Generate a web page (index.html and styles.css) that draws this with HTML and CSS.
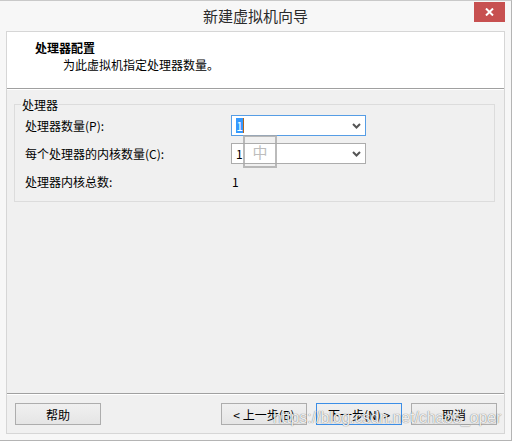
FILE: index.html
```html
<!DOCTYPE html>
<html lang="zh-CN">
<head>
<meta charset="utf-8">
<title>新建虚拟机向导</title>
<link rel="stylesheet" href="styles.css">
</head>
<body>
<div class="window">
  <div class="titlebar">
    <span class="spacer"></span>
    <div class="title">新建虚拟机向导</div>
    <div class="close" aria-label="关闭">
      <svg width="9" height="8" viewBox="0 0 9 8"><path d="M1 0.5 L8 7.5 M8 0.5 L1 7.5" stroke="#fff" stroke-width="2" fill="none"/></svg>
    </div>
  </div>
  <div class="frame">
    <header class="head">
      <div class="head-title">处理器配置</div>
      <div class="head-sub">为此虚拟机指定处理器数量。</div>
    </header>
    <main class="body">
      <fieldset class="group">
        <legend>处理器</legend>
        <div class="rows">
          <span class="lbl">处理器数量(P):</span>
          <div class="combo focused">
            <span class="val"><span class="sel">1</span><span class="caret"></span></span>
            <svg class="arrow" width="9" height="6" viewBox="0 0 9 6"><path d="M1 1 L4.5 4.5 L8 1" stroke="#555" stroke-width="2" fill="none"/></svg>
          </div>
          <span class="lbl">每个处理器的内核数量(C):</span>
          <div class="combo">
            <span class="val">1</span>
            <svg class="arrow" width="9" height="6" viewBox="0 0 9 6"><path d="M1 1 L4.5 4.5 L8 1" stroke="#555" stroke-width="2" fill="none"/></svg>
          </div>
          <span class="lbl">处理器内核总数:</span>
          <span class="total">1</span>
        </div>
      </fieldset>
    </main>
    <footer class="foot">
      <button class="btn">帮助</button>
      <div class="nav">
        <button class="btn">&lt; 上一步(B)</button>
        <button class="btn default">下一步(N) &gt;</button>
        <button class="btn">取消</button>
      </div>
    </footer>
  </div>
  <div class="ime">中</div>
  <div class="watermark">https://blog.csdn.net/chaos_oper</div>
</div>
</body>
</html>
```
FILE: styles.css
```css
* { box-sizing: border-box; }
html, body { margin: 0; padding: 0; background: #ffffff; }
body {
  font-family: "Noto Sans CJK SC", "Noto Sans", sans-serif;
  font-size: 12px;
  color: #000;
}
.window {
  position: relative;
  width: 512px;
  height: 441px;
  background: #f7f7f7;
  border-top: 1px solid #c9c9c9;
  border-right: 1px solid #b4b4b4;
  border-bottom: 1px solid #b4b4b4;
  padding: 0 6px;
  display: flex;
  flex-direction: column;
}
.titlebar {
  height: 30px;
  display: grid;
  grid-template-columns: 1fr auto 1fr;
  align-items: start;
}
.title {
  font-size: 15px;
  line-height: 30px;
  color: #2b2b2b;
}
.close {
  justify-self: end;
  margin-top: 1px;
  width: 31px;
  height: 20px;
  background: #c75050;
  display: flex;
  align-items: center;
  justify-content: center;
}
.frame {
  height: 403px;
  border: 1px solid #d6d6d6;
  display: flex;
  flex-direction: column;
  background: #f0f0f0;
}
.head {
  height: 56px;
  background: #ffffff;
  padding: 8px 0 0 28px;
}
.head-title {
  font-weight: bold;
  line-height: 16px;
}
.head-sub {
  margin-top: 1px;
  line-height: 16px;
  padding-left: 28px;
}
.body {
  flex: 1;
  border-top: 1px solid #a0a0a0;
  box-shadow: inset 0 1px 0 #ffffff;
  padding: 8px 9px 0 7px;
}
.group {
  margin: 0;
  width: 481px;
  border: 1px solid #dcdcdc;
  padding: 3px 10px 9px 10px;
}
.group legend {
  margin-left: -4px;
  padding: 0 1px;
  line-height: 15px;
}
.rows {
  display: grid;
  grid-template-columns: 206px 135px;
  grid-auto-rows: 21px;
  row-gap: 7px;
  align-items: center;
}
.lbl { line-height: 21px; }
.combo {
  height: 21px;
  background: #ffffff;
  border: 1px solid #acacac;
  display: flex;
  align-items: center;
  justify-content: space-between;
  padding: 0 4px 0 4px;
}
.combo.focused { border-color: #569de5; }
.val {
  display: flex;
  align-items: center;
  line-height: 15px;
}
.sel {
  background: #3399ff;
  color: #ffffff;
  width: 7px;
  height: 15px;
  text-align: center;
}
.caret {
  width: 1px;
  height: 15px;
  background: #b5651d;
}
.arrow { display: block; }
.total { padding-left: 1px; }
.foot {
  height: 40px;
  border-top: 1px solid #a0a0a0;
  box-shadow: inset 0 1px 0 #ffffff;
  padding: 9px 7px 0 8px;
  display: flex;
  justify-content: space-between;
  align-items: flex-start;
}
.nav {
  display: flex;
  gap: 9px;
}
.btn {
  width: 86px;
  height: 22px;
  margin: 0;
  padding: 0;
  font-family: inherit;
  font-size: 12px;
  color: #000;
  border: 1px solid #adadad;
  background: linear-gradient(#f0f0f0, #e5e5e5);
  border-radius: 0;
}
.btn.default { border-color: #3c8ee6; }
.ime {
  position: absolute;
  left: 243px;
  top: 134px;
  width: 34px;
  height: 33px;
  border: 2px solid rgba(170, 170, 170, 0.8);
  color: #bdbdbd;
  font-size: 15px;
  line-height: 29px;
  text-align: center;
}
.watermark {
  position: absolute;
  left: 273px;
  top: 408px;
  font-family: "Liberation Sans", Arial, sans-serif;
  font-size: 15.8px;
  line-height: 18px;
  color: rgba(255, 255, 255, 0.9);
  text-shadow: 0 0 1px rgba(0, 0, 0, 0.45), 0 0 1px rgba(0, 0, 0, 0.25);
  white-space: nowrap;
}
```
